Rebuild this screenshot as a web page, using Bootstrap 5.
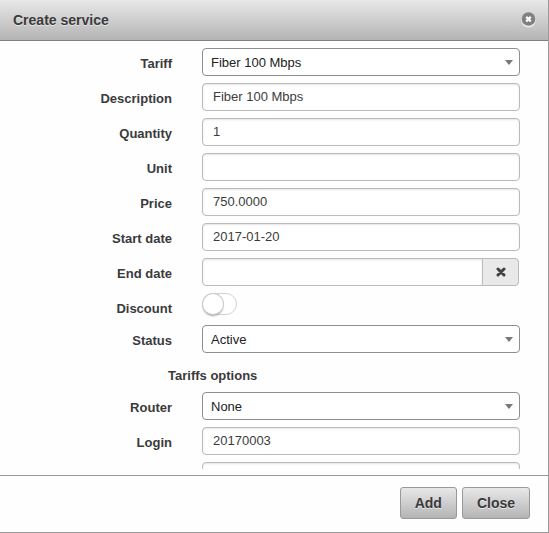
<!DOCTYPE html>
<html lang="en">
<head>
<meta charset="utf-8">
<meta name="viewport" content="width=device-width, initial-scale=1">
<title>Create service</title>
<link href="https://cdn.jsdelivr.net/npm/bootstrap@5.3.0/dist/css/bootstrap.min.css" rel="stylesheet">
<style>
  body { font-family: "Liberation Sans", Arial, sans-serif; font-size: 13px; color: #3a3a3c; }
  .dialog { border-right: 1px solid #999; border-bottom: 1px solid #999; background: #fefefe; }
  .dialog-head { height: 41px; padding: 0 12px 0 13px; border-bottom: 1px solid #808080;
    background: linear-gradient(#e8e8e8, #b4b4b4); }
  .dialog-head h1 { font-size: 14px; font-weight: 700; line-height: 20px; text-shadow: 0 1px 0 #e6e6e6; }
  .dismiss { width: 15px; height: 16px; line-height: 0; }
  .dialog-form { padding: 7px 28px 0 0; margin-bottom: 6px; min-height: 0; }
  .field { display: grid; grid-template-columns: 172px minmax(0, 1fr); column-gap: 30px; margin-bottom: 7px; }
  .field > label { font-weight: 700; text-align: right; line-height: 20px; padding-top: 6px; }
  .field .form-control, .field .form-select { height: 28px; font-size: 13px; line-height: 18px; color: #3c3c3c; border-radius: 4px; background-color: #fff; }
  .field .form-control { padding: 3px 10px 5px; border-color: #bbb; box-shadow: inset 0 1px 2px #e4e4e4; }
  .field .form-select { padding: 5px 24px 3px 8px; border-color: #8e8e8e; color: #222;
    background-image: url("data:image/svg+xml,%3Csvg xmlns='http://www.w3.org/2000/svg' viewBox='0 0 8 5'%3E%3Cpath d='M0 0h8L4 5z' fill='%23777'/%3E%3C/svg%3E");
    background-size: 8px 5px; background-position: right 6px center; }
  .field .input-group { padding-right: 1px; }
  .clear-date { width: 37px; height: 28px; padding: 0; border-color: #bbb; background: #e9e9e9; border-radius: 4px; line-height: 0; }
  .field.toggle { margin-bottom: 10px; height: 22px; }
  .field .form-switch { padding: 0; margin: 0; min-height: 0; }
  .field .form-switch .form-check-input { float: none; display: block; margin: 0; width: 35px; height: 22px; border: 1px solid #d2d2d2; border-radius: 11px; background: #fff; }
  .field .form-switch .form-check-input::before { content: ""; display: block; width: 20px; height: 20px; border-radius: 50%; background: #fff; box-shadow: 0 0 0 1px #ccc, 0 2px 2px #999; }
  .field .form-switch .form-check-input:checked { background: #6ab04c; }
  .field .form-switch .form-check-input:checked::before { margin-left: 13px; }
  .section-title { font-size: 13px; font-weight: 700; line-height: 20px; margin: 13px 0 6px 168px; }
  .dialog-foot { border-top: 1px solid #999; padding: 11px 18px 13px; gap: 5px; }
  .btn-grey { height: 32px; padding: 0 14px; font-size: 14px; font-weight: 700; color: #3a3a3c; border: 1px solid #999; border-radius: 3px;
    background: linear-gradient(#e8e8e8, #b4b4b4); text-shadow: 0 1px 0 #e6e6e6; }
</style>
</head>
<body>
<main class="dialog d-flex flex-column vh-100">
  <header class="dialog-head d-flex align-items-center justify-content-between flex-shrink-0">
    <h1 class="m-0">Create service</h1>
    <button type="button" class="dismiss btn p-0 border-0" aria-label="Dismiss">
      <svg width="15" height="16" viewBox="0 0 15 16"><circle cx="7.5" cy="8.3" r="7.2" fill="#ececec"/><circle cx="7.5" cy="7" r="6.8" fill="#808080"/><path d="M5.2 4.9l4.6 4.6M9.8 4.9L5.2 9.5" stroke="#fff" stroke-width="2.3"/></svg>
    </button>
  </header>
  <form class="dialog-form flex-fill overflow-hidden" id="service">
    <div class="field"><label for="tariff">Tariff</label><select class="form-select" id="tariff"><option>Fiber 100 Mbps</option></select></div>
    <div class="field"><label for="description">Description</label><input class="form-control" id="description" value="Fiber 100 Mbps"></div>
    <div class="field"><label for="quantity">Quantity</label><input class="form-control" id="quantity" value="1"></div>
    <div class="field"><label for="unit">Unit</label><input class="form-control" id="unit"></div>
    <div class="field"><label for="price">Price</label><input class="form-control" id="price" value="750.0000"></div>
    <div class="field"><label for="start">Start date</label><input class="form-control" id="start" value="2017-01-20"></div>
    <div class="field"><label for="end">End date</label>
      <div class="input-group">
        <input class="form-control" id="end">
        <button type="button" class="btn clear-date" aria-label="Clear end date">
          <svg width="10" height="10" viewBox="0 0 10 10"><path d="M2 2l6 6M8 2L2 8" stroke="#404040" stroke-width="3" stroke-linecap="round"/></svg>
        </button>
      </div>
    </div>
    <div class="field toggle"><label for="discount">Discount</label>
      <div class="form-check form-switch"><input class="form-check-input" type="checkbox" role="switch" id="discount"></div>
    </div>
    <div class="field"><label for="status">Status</label><select class="form-select" id="status"><option>Active</option></select></div>
    <h2 class="section-title">Tariffs options</h2>
    <div class="field"><label for="router">Router</label><select class="form-select" id="router"><option>None</option></select></div>
    <div class="field"><label for="login">Login</label><input class="form-control" id="login" value="20170003"></div>
    <div class="field"><span></span><input class="form-control" type="password" aria-label="Password"></div>
  </form>
  <footer class="dialog-foot d-flex justify-content-end flex-shrink-0">
    <button type="submit" form="service" class="btn btn-grey">Add</button>
    <button type="button" class="btn btn-grey">Close</button>
  </footer>
</main>
<script src="https://cdn.jsdelivr.net/npm/bootstrap@5.3.0/dist/js/bootstrap.bundle.min.js"></script>
</body>
</html>
